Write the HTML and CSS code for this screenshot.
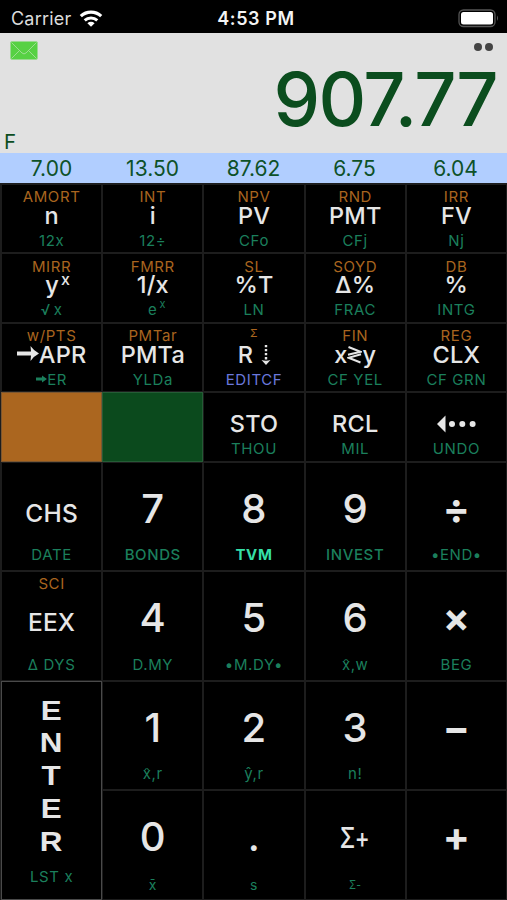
FILE: index.html
```
<!DOCTYPE html>
<html lang="en">
<head>
<meta charset="UTF-8">
<meta name="viewport" content="width=device-width, initial-scale=1.0">
<title>Calculator</title>
<link rel="stylesheet" href="styles.css">
</head>
<body>

<div class="status">
  <div class="carrier">
    <span>Carrier</span>
    <svg class="wifi" width="24" height="18" viewBox="0 0 24 18">
      <path d="M1.800 6.200a15 15 0 0 1 20.400 0" fill="none" stroke="#fff" stroke-width="3.200"/>
      <path d="M5.700 10.400a9.300 9.300 0 0 1 12.600 0" fill="none" stroke="#fff" stroke-width="3"/>
      <path d="M12 16.800L8.400 13.200a5.200 5.200 0 0 1 7.200 0z" fill="#fff"/>
    </svg>
  </div>
  <div class="time">4:53 PM</div>
  <svg class="battery" width="42" height="19" viewBox="0 0 42 19">
    <rect x="1" y="1" width="36" height="16.500" rx="4.500" fill="none" stroke="#555" stroke-width="1.300"/>
    <rect x="3" y="3" width="32" height="12.500" rx="2.500" fill="#fff"/>
    <path d="M39 6.500q2 2.700 0 5.500z" fill="#555"/>
  </svg>
</div>

<div class="display">
  <div class="display-top">
    <svg class="mail" width="28" height="19" viewBox="0 0 28 19">
      <rect x="0.500" y="0.500" width="27" height="18" rx="1" fill="#57d143"/>
      <path d="M1.500 1.500l10.500 10.500q2 1.800 4 0l10.500-10.500M1.500 17.500l8-8M26.500 17.500l-8-8" fill="none" stroke="#a5df99" stroke-width="0.900"/>
    </svg>
    <div class="dots"><i></i><i></i></div>
  </div>
  <div class="value">907.77</div>
  <div class="flag">F</div>
</div>

<div class="registers">
  <span>7.00</span><span>13.50</span><span>87.62</span><span>6.75</span><span>6.04</span>
</div>

<div class="keys">
  <div class="key"><span class="f">AMORT</span><span class="m">n</span><span class="g">12x</span></div>
  <div class="key"><span class="f">INT</span><span class="m">i</span><span class="g">12÷</span></div>
  <div class="key"><span class="f">NPV</span><span class="m">PV</span><span class="g">CFo</span></div>
  <div class="key"><span class="f">RND</span><span class="m">PMT</span><span class="g">CFj</span></div>
  <div class="key"><span class="f">IRR</span><span class="m">FV</span><span class="g">Nj</span></div>

  <div class="key"><span class="f">MIRR</span><span class="m">y<sup>x</sup></span><span class="g">√<span class="thin"></span>x</span></div>
  <div class="key"><span class="f">FMRR</span><span class="m">1/x</span><span class="g">e<sup>x</sup></span></div>
  <div class="key"><span class="f">SL</span><span class="m">%T</span><span class="g">LN</span></div>
  <div class="key"><span class="f">SOYD</span><span class="m">Δ%</span><span class="g">FRAC</span></div>
  <div class="key"><span class="f">DB</span><span class="m">%</span><span class="g">INTG</span></div>

  <div class="key">
    <span class="f">w/PTS</span>
    <span class="m"><svg class="right" width="22" height="16" viewBox="0 0 22 16"><path d="M0 5.600h14L13.500 0Q17 5 22 7.500q-5 2.500-8.500 7.500L14 9.400H0z" fill="#e6e6e6"/></svg>APR</span>
    <span class="g"><svg width="11" height="8" viewBox="0 0 11 8"><path d="M0 2.400h6L6 0.500 11 4 6 7.500 6 5.600H0z" fill="#1b7f5c"/></svg>ER</span>
  </div>
  <div class="key"><span class="f">PMTar</span><span class="m">PMTa</span><span class="g">YLDa</span></div>
  <div class="key">
    <span class="f tiny">Σ</span>
    <span class="m">R<svg class="down" width="10" height="20" viewBox="0 0 10 20"><path d="M3.800 0h2.400v2.200H3.800zM3.800 4h2.400v2.200H3.800zM3.800 8h2.400v2.200H3.800zM3.800 12h2.400v2.500H3.800zM0.500 15q4.500 1.500 9 0L5 20z" fill="#e6e6e6"/></svg></span>
    <span class="g edit">EDITCF</span>
  </div>
  <div class="key">
    <span class="f">FIN</span>
    <span class="m">x<svg width="15" height="18" viewBox="0 0 15 18"><path d="M1.500 1L13.500 5.800 1 8.800M14 8.200L1.500 11.800l12 4.700" fill="none" stroke="#e6e6e6" stroke-width="2"/></svg>y</span>
    <span class="g">CF YEL</span>
  </div>
  <div class="key"><span class="f">REG</span><span class="m">CLX</span><span class="g">CF GRN</span></div>

  <div class="key orange"></div>
  <div class="key green"></div>
  <div class="key"><span class="f"></span><span class="m">STO</span><span class="g">THOU</span></div>
  <div class="key"><span class="f"></span><span class="m">RCL</span><span class="g">MIL</span></div>
  <div class="key">
    <span class="f"></span>
    <span class="m"><svg width="39" height="18" viewBox="0 0 39 18"><path d="M0 9L8.500 0.500v17z" fill="#e6e6e6"/><circle cx="15" cy="9" r="3" fill="#e6e6e6"/><circle cx="25.300" cy="9" r="3" fill="#e6e6e6"/><circle cx="35.600" cy="9" r="3" fill="#e6e6e6"/></svg></span>
    <span class="g">UNDO</span>
  </div>

  <div class="key tall word"><span class="f"></span><span class="m">CHS</span><span class="g">DATE</span></div>
  <div class="key tall"><span class="f"></span><span class="m">7</span><span class="g bold">BONDS</span></div>
  <div class="key tall"><span class="f"></span><span class="m">8</span><span class="g active">TVM</span></div>
  <div class="key tall"><span class="f"></span><span class="m">9</span><span class="g bold">INVEST</span></div>
  <div class="key tall op"><span class="f"></span><span class="m">÷</span><span class="g">•END•</span></div>

  <div class="key tall word"><span class="f">SCI</span><span class="m">EEX</span><span class="g">Δ DYS</span></div>
  <div class="key tall"><span class="f"></span><span class="m">4</span><span class="g">D.MY</span></div>
  <div class="key tall"><span class="f"></span><span class="m">5</span><span class="g">•M.DY•</span></div>
  <div class="key tall"><span class="f"></span><span class="m">6</span><span class="g">x̂,w</span></div>
  <div class="key tall op"><span class="f"></span><span class="m">×</span><span class="g">BEG</span></div>

  <div class="key enter">
    <span class="letters"><b>E</b><b>N</b><b>T</b><b>E</b><b>R</b></span>
    <span class="g">LST x</span>
  </div>
  <div class="key tall"><span class="f"></span><span class="m">1</span><span class="g">x̂,r</span></div>
  <div class="key tall"><span class="f"></span><span class="m">2</span><span class="g">ŷ,r</span></div>
  <div class="key tall"><span class="f"></span><span class="m">3</span><span class="g">n!</span></div>
  <div class="key tall op"><span class="f"></span><span class="m">−</span></div>

  <div class="key tall last"><span class="f"></span><span class="m">0</span><span class="g">x̄</span></div>
  <div class="key tall last"><span class="f"></span><span class="m">.</span><span class="g">s</span></div>
  <div class="key tall last sigma"><span class="f"></span><span class="m">Σ+</span><span class="g">Σ-</span></div>
  <div class="key tall op"><span class="f"></span><span class="m">+</span></div>
</div>

</body>
</html>
```
FILE: styles.css
```
* {
  box-sizing: border-box;
}
body {
  margin: 0;
  width: 507px;
  height: 900px;
  overflow: hidden;
  background: #000;
  font-family: Inter, "Liberation Sans", sans-serif;
}
svg {
  display: block;
  flex: none;
}

/* status bar */
.status {
  display: grid;
  grid-template-columns: 1fr auto 1fr;
  align-items: center;
  height: 33px;
  padding: 4px 7px 0 11px;
  color: #f4f4f4;
  font-size: 18px;
}
.carrier {
  display: flex;
  align-items: center;
  gap: 8px;
  color: #dcdcdc;
  letter-spacing: 0.2px;
}
.time {
  padding-left: 1px;
  font-weight: 600;
  letter-spacing: 0.6px;
}
.battery {
  justify-self: end;
}

/* display */
.display {
  height: 120px;
  background: #e1e1e1;
  color: #0b4d1e;
}
.display-top {
  display: flex;
  justify-content: space-between;
  height: 31px;
  padding: 8px 14px 0 10px;
}
.dots {
  display: flex;
  gap: 3px;
  padding-top: 2px;
}
.dots i {
  width: 8px;
  height: 8px;
  border-radius: 50%;
  background: #444;
}
.value {
  height: 70px;
  padding-right: 10px;
  line-height: 71px;
  font-size: 74px;
  font-weight: 450;
  letter-spacing: -1.6px;
  text-align: right;
}
.flag {
  padding-left: 4px;
  line-height: 15px;
  font-size: 20.5px;
}
.registers {
  display: grid;
  grid-template-columns: repeat(5, 1fr);
  height: 30px;
  padding: 0 1px;
  line-height: 31px;
  background: #b1ceff;
  color: #0d5128;
  font-size: 21px;
  text-align: center;
}

/* keypad */
.keys {
  display: grid;
  grid-template-columns: repeat(5, 1fr);
  grid-template-rows: repeat(4, 67.5px) 107.4px 107.9px 107.1px 108px;
  gap: 2px;
  height: 717px;
  padding: 1.5px 1px 0 2px;
  background: #1d1d1d;
  line-height: 1;
}
.key {
  display: flex;
  flex-direction: column;
  align-items: center;
  padding: 4px 0;
  background: #000;
  white-space: nowrap;
}
.f, .m, .g {
  display: flex;
  align-items: center;
  justify-content: center;
}
.f {
  height: 16px;
  color: #a9651f;
  font-size: 15px;
  letter-spacing: 0.6px;
}
.m {
  height: 22px;
  color: #e6e6e6;
  font-size: 23.5px;
  font-weight: 550;
  letter-spacing: 0.2px;
}
.g {
  height: 16px;
  margin-top: auto;
  color: #1b7f5c;
  font-size: 15px;
  letter-spacing: 0.6px;
}
.tiny {
  font-size: 11px;
  padding-bottom: 5px;
}
sup {
  width: 9px;
  margin: -12px -12px 0 2px;
  font-size: 16px;
}
.g sup {
  width: 6px;
  margin: -10px -8px 0 2px;
  font-size: 11px;
}
.thin {
  width: 3px;
}
.right {
  margin-bottom: 2px;
}
.down {
  margin: 0 -1px 0 8px;
}
.edit {
  color: #6a78dc;
}
.orange {
  background: #ab661f;
  outline: 1px solid #7d5730;
}
.green {
  background: #0b4a1d;
  outline: 1px solid #255c36;
}

/* number rows */
.tall {
  padding-bottom: 7px;
}
.tall .m {
  height: 52px;
  font-size: 40px;
}
.word .m {
  height: 61px;
  font-size: 24.5px;
}
.op .m {
  height: 53px;
  font-size: 40px;
  font-weight: 650;
}
.bold {
  font-weight: 550;
}
.active {
  color: #35dfa7;
  font-weight: 650;
}
.last .g {
  margin-bottom: -1px;
  font-size: 14px;
}
.sigma .m {
  height: 54px;
  font-size: 28px;
  font-weight: 500;
  transform: scaleX(0.8);
}
.sigma .g {
  font-size: 12px;
  transform: scaleX(0.85);
}

.enter {
  grid-row: span 2;
  padding: 13px 0 14px;
  outline: 1px solid #4a4a4a;
}
.letters {
  display: flex;
  flex-direction: column;
  align-items: center;
  color: #e6e6e6;
  font: bold 28px/32.7px "Liberation Sans", sans-serif;
  transform: scaleX(1.12);
}
```
